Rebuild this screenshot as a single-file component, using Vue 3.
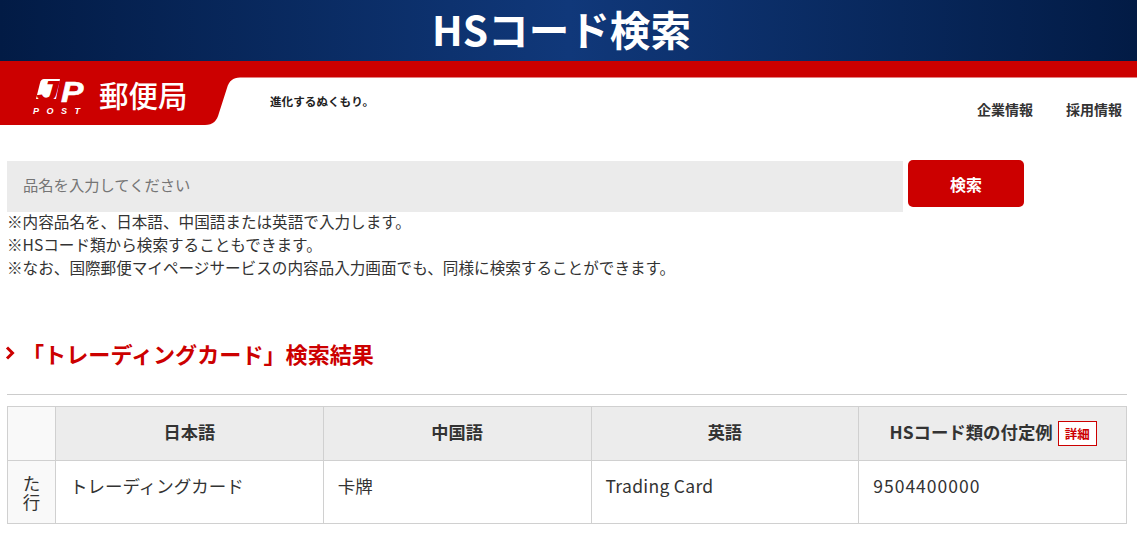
<script setup>
const notes = [
  "※内容品名を、日本語、中国語または英語で入力します。",
  "※HSコード類から検索することもできます。",
  "※なお、国際郵便マイページサービスの内容品入力画面でも、同様に検索することができます。",
];
</script>

<template>
  <div class="page">
    <h1 class="title"><span>HSコード検索</span></h1>

    <header class="site-header">
      <svg class="site-header__bg" width="1137" height="64" viewBox="0 0 1137 64">
        <path d="M0 0H1137V16.5H240C233 16.5 229 20 227 27L219 52C217 60 213 64 205 64H0Z" fill="#cc0000" />
      </svg>
      <div class="logo">
        <div class="logo__mark">
          <svg width="26" height="22" viewBox="0 0 26 22">
            <path d="M8 0H24L20 20H0L4 4Q5 0 8 0Z" fill="#fff" />
          </svg>
          <span class="logo__j">J</span>
          <span class="logo__p">P</span>
          <span class="logo__post">POST</span>
        </div>
        <span class="logo__name">郵便局</span>
      </div>
      <span class="tagline">進化するぬくもり。</span>
      <nav class="site-nav">
        <a>企業情報</a>
        <a>採用情報</a>
      </nav>
    </header>

    <main class="content">
      <div class="search">
        <input class="search__input" type="text" placeholder="品名を入力してください" />
        <button class="search__btn" type="button">検索</button>
      </div>
      <div class="notes">
        <p v-for="n in notes" :key="n" class="note">{{ n }}</p>
      </div>

      <h2 class="result-title">
        <svg width="10" height="14" viewBox="0 0 10 14">
          <path d="M2 1.5L7.5 7L2 12.5" fill="none" stroke="#cc0000" stroke-width="3" />
        </svg>
        <span>「トレーディングカード」検索結果</span>
      </h2>

      <table class="result">
        <thead>
          <tr>
            <th class="result__index"></th>
            <th>日本語</th>
            <th>中国語</th>
            <th>英語</th>
            <th class="result__hs">HSコード類の付定例<a class="detail">詳細</a></th>
          </tr>
        </thead>
        <tbody>
          <tr>
            <td class="result__index">た<br />行</td>
            <td>トレーディングカード</td>
            <td>卡牌</td>
            <td class="latin">Trading Card</td>
            <td class="code">9504400000</td>
          </tr>
        </tbody>
      </table>
    </main>
  </div>
</template>

<style scoped>
.page {
  width: 1137px;
  height: 535px;
  overflow: hidden;
  color: #333;
  font-family: "Noto Sans CJK JP", "Noto Sans", sans-serif;
}
.title {
  margin: 0;
  height: 61px;
  padding: 0 14px 5px 0;
  box-sizing: border-box;
  display: flex;
  align-items: center;
  justify-content: center;
  background: linear-gradient(90deg, #021b45 0%, #10387a 50%, #021b45 100%);
  color: #fff;
  font-size: 40.6px;
  font-weight: 700;
}
.site-header {
  position: relative;
  height: 64px;
  display: flex;
}
.site-header__bg {
  position: absolute;
  left: 0;
  top: 0;
}
.logo {
  position: relative;
  margin: 17px 0 0 33px;
  width: 237px;
  display: flex;
  color: #fff;
}
.logo__mark {
  position: relative;
  width: 51px;
  height: 40px;
  margin-right: 15px;
}
.logo__mark svg {
  position: absolute;
  left: 3px;
  top: 1px;
}
.logo__j,
.logo__p {
  position: absolute;
  font-family: "Liberation Sans", sans-serif;
  font-size: 30px;
  line-height: 40px;
  font-weight: 700;
  font-style: italic;
  transform-origin: left center;
}
.logo__j {
  left: 3px;
  top: -7px;
  color: #cc0000;
  transform: scaleX(1.4);
}
.logo__p {
  left: 28px;
  top: -6px;
  color: #fff;
  -webkit-text-stroke: 0.6px #fff;
  transform: scaleX(1.12);
}
.logo__post {
  position: absolute;
  left: 0;
  top: 27px;
  font-family: "Liberation Sans", sans-serif;
  font-size: 9px;
  line-height: 12px;
  font-weight: 700;
  font-style: italic;
  letter-spacing: 7.5px;
}
.logo__name {
  font-size: 29.5px;
  line-height: 32px;
  font-weight: 500;
}
.tagline {
  position: relative;
  margin-top: 32px;
  font-size: 11.6px;
  line-height: 16px;
  font-weight: 700;
  color: #222;
}
.site-nav {
  position: absolute;
  right: 15px;
  top: 38px;
  display: flex;
  gap: 33px;
  font-size: 14px;
  line-height: 20px;
  font-weight: 700;
}
.content {
  padding: 35px 10px 0 7px;
}
.search {
  display: flex;
  align-items: flex-start;
  gap: 5px;
}
.search__input {
  width: 896px;
  height: 51px;
  margin-top: 1px;
  padding: 0 16px 6px;
  box-sizing: border-box;
  border: 0;
  background: #ebebeb;
  font-family: inherit;
  font-size: 15.3px;
}
.search__input::placeholder {
  color: #757575;
  opacity: 1;
}
.search__btn {
  width: 116px;
  height: 47px;
  border: 0;
  border-radius: 5px;
  background: #cc0000;
  color: #fff;
  font-family: inherit;
  font-size: 16px;
  font-weight: 700;
}
.notes {
  margin-top: -2px;
}
.note {
  margin: 0;
  font-size: 15.6px;
  line-height: 23px;
}
.result-title {
  margin: 58px 0 0 -2px;
  padding-bottom: 26px;
  display: flex;
  align-items: center;
  gap: 7px;
  font-size: 22.1px;
  line-height: 32px;
  font-weight: 700;
  color: #cc0000;
  position: relative;
}
.result-title::after {
  content: "";
  position: absolute;
  left: 2px;
  right: 0;
  bottom: 0;
  border-bottom: 1px solid #ccc;
}
.result {
  width: 1120px;
  margin-top: 11px;
  table-layout: fixed;
  border-collapse: collapse;
}
.result th,
.result td {
  border: 1px solid #d0d0d0;
  padding: 0 14px;
  text-align: left;
}
.result th {
  height: 54px;
  box-sizing: border-box;
  padding-bottom: 4px;
  background: #ececec;
  text-align: center;
  font-size: 17.2px;
  font-weight: 700;
}
.result td {
  height: 63px;
  padding-bottom: 12px;
  box-sizing: border-box;
  font-size: 17.5px;
  line-height: 24px;
}
.result .result__index {
  width: 48px;
  padding: 0;
  background: #f9f9f9;
  text-align: center;
  line-height: 19px;
}
.result .result__hs {
  padding: 0 0 2px 1px;
  font-size: 17.4px;
  white-space: nowrap;
}
.result .latin {
  letter-spacing: 0.3px;
}
.result .code {
  letter-spacing: 1px;
}
.detail {
  display: inline-block;
  margin-left: 5px;
  padding: 0 6px;
  border: 1px solid #cc0000;
  background: #fff;
  color: #cc0000;
  font-size: 12.5px;
  line-height: 23px;
  vertical-align: middle;
}
</style>
